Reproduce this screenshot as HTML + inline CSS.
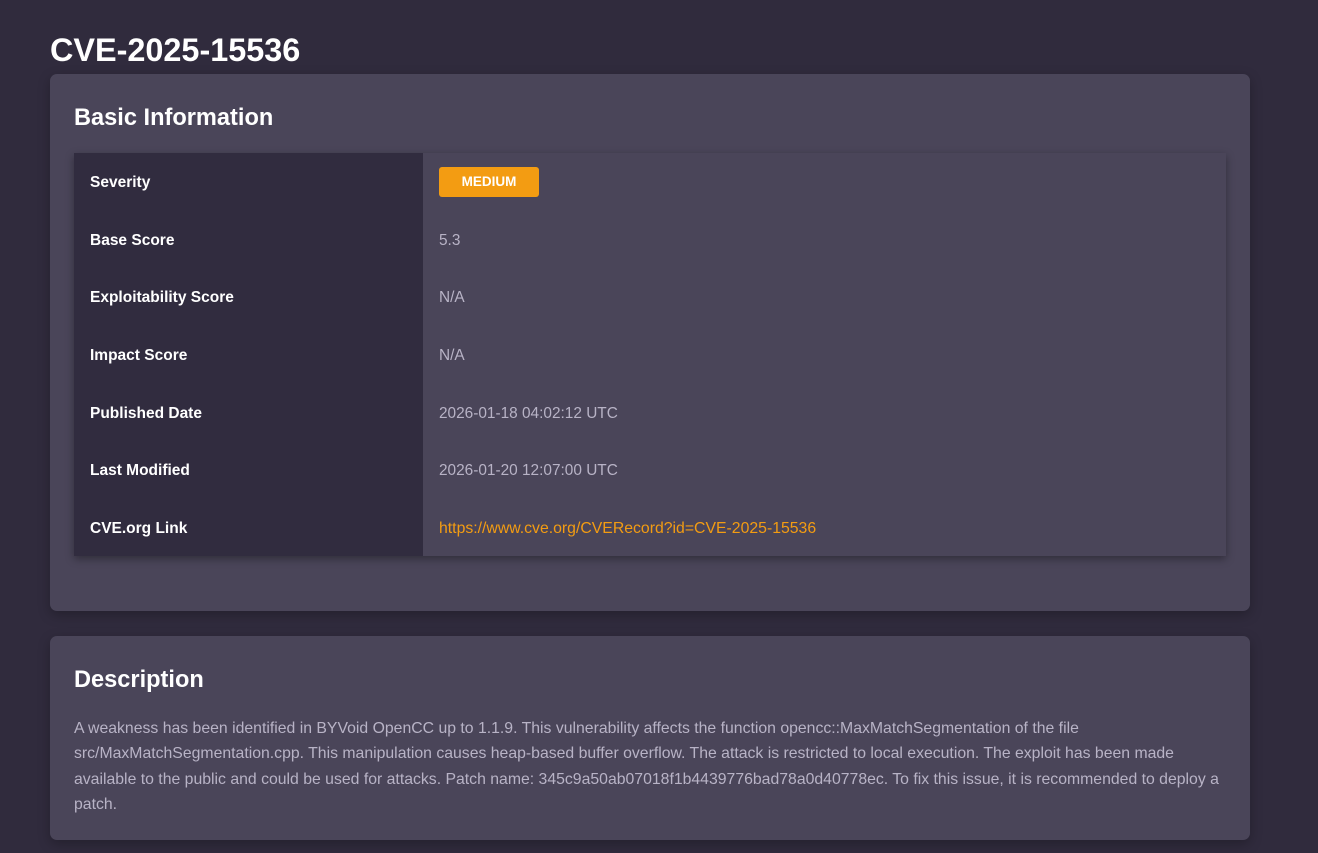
<!DOCTYPE html>
<html><head><meta charset="utf-8"><style>
html,body{margin:0;padding:0}
body{background:#302b3d;width:1318px;height:853px;overflow:hidden;font-family:"Liberation Sans",sans-serif;color:#fff}
h1{position:absolute;left:50px;top:28px;margin:0;font-size:32.4px;font-weight:bold;line-height:44px}
.card{position:absolute;left:50px;width:1200px;background:#4a4559;border-radius:7px;box-shadow:0 4px 12px rgba(0,0,0,.25)}
h2{position:absolute;left:24px;margin:0;font-size:23.6px;font-weight:bold;line-height:30px}
table{position:absolute;left:24px;top:79px;width:1152px;border-collapse:collapse;box-shadow:0 3px 8px rgba(0,0,0,.35)}
td{height:57.6px;padding:3px 0 0 16px;box-sizing:border-box;font-size:15.5px;vertical-align:middle}
td.k{width:349px;background:#312c3f;font-weight:bold;color:#fff}
td.v{background:#4a4559;color:#b8b3c6;font-size:15.4px}
.badge{display:inline-block;background:#f39c12;color:#fff;font-weight:bold;font-size:13.5px;width:100px;height:30px;line-height:30px;text-align:center;border-radius:3px}
a{color:#f39c12;text-decoration:none;font-size:15.8px}
p{position:absolute;left:24px;top:80px;margin:0;font-size:15.8px;line-height:25.3px;color:#b8b3c6;white-space:nowrap}
</style></head><body>
<h1>CVE-2025-15536</h1>
<div class="card" style="top:74px;height:537px">
<h2 style="top:29px">Basic Information</h2>
<table>
<tr><td class="k">Severity</td><td class="v" style="padding-top:0"><span class="badge">MEDIUM</span></td></tr>
<tr><td class="k">Base Score</td><td class="v">5.3</td></tr>
<tr><td class="k">Exploitability Score</td><td class="v">N/A</td></tr>
<tr><td class="k">Impact Score</td><td class="v">N/A</td></tr>
<tr><td class="k">Published Date</td><td class="v">2026-01-18 04:02:12 UTC</td></tr>
<tr><td class="k">Last Modified</td><td class="v">2026-01-20 12:07:00 UTC</td></tr>
<tr><td class="k">CVE.org Link</td><td class="v"><a>https://www.cve.org/CVERecord?id=CVE-2025-15536</a></td></tr>
</table>
</div>
<div class="card" style="top:636px;height:204px">
<h2 style="top:29px">Description</h2>
<p>A weakness has been identified in BYVoid OpenCC up to 1.1.9. This vulnerability affects the function opencc::MaxMatchSegmentation of the file<br>src/MaxMatchSegmentation.cpp. This manipulation causes heap-based buffer overflow. The attack is restricted to local execution. The exploit has been made<br>available to the public and could be used for attacks. Patch name: 345c9a50ab07018f1b4439776bad78a0d40778ec. To fix this issue, it is recommended to deploy a<br>patch.</p>
</div>
</body></html>
